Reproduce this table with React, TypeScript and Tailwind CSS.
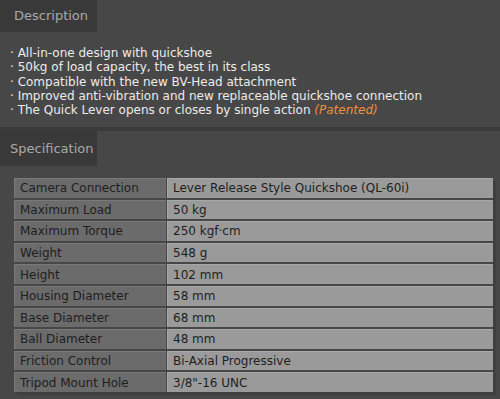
import React from "react";

const features = [
  "All-in-one design with quickshoe",
  "50kg of load capacity, the best in its class",
  "Compatible with the new BV-Head attachment",
  "Improved anti-vibration and new replaceable quickshoe connection",
];

const specs: [string, string][] = [
  ["Camera Connection", "Lever Release Style Quickshoe (QL-60i)"],
  ["Maximum Load", "50 kg"],
  ["Maximum Torque", "250 kgf·cm"],
  ["Weight", "548 g"],
  ["Height", "102 mm"],
  ["Housing Diameter", "58 mm"],
  ["Base Diameter", "68 mm"],
  ["Ball Diameter", "48 mm"],
  ["Friction Control", "Bi-Axial Progressive"],
  ["Tripod Mount Hole", "3/8\"-16 UNC"],
];

export default function App() {
  return (
    <div
      className="h-[399px] w-[500px] overflow-hidden bg-[#474747]"
      style={{ fontFamily: '"DejaVu Sans", sans-serif' }}
    >
      {/* Description header tab */}
      <div className="h-[32px]">
        <div className="flex h-full w-[97px] items-center bg-[#393939] pl-[14px] text-[13px] text-[#a9a9a9]">
          Description
        </div>
      </div>
      <ul className="pl-[10px] pt-[14px] text-[12px] leading-[14.3px] text-[#ececec]">
        {features.map((f) => (
          <li key={f}>· {f}</li>
        ))}
        <li>
          · The Quick Lever opens or closes by single action{" "}
          <span className="italic text-[#f0903a]">(Patented)</span>
        </li>
      </ul>
      <div className="mt-[9.5px] h-[4px] bg-[#3c3c3c]" />
      {/* Specification header tab */}
      <div className="h-[35px]">
        <div className="flex h-full w-[97px] items-center bg-[#393939] pl-[10px] text-[13px] text-[#a9a9a9]">
          Specification
        </div>
      </div>
      <div className="pl-[14px] pt-[12px]">
        <div className="flex w-[479px] flex-col gap-[2px] shadow-[3px_3px_0_#3f3f3f]">
          {specs.map(([k, v]) => (
            <div key={k} className="flex h-[19.6px] gap-[1px] text-[12px] text-[#1e1e1e]">
              <div className="flex w-[152px] items-center border-t border-l border-[#7a7a7a] bg-[#6b6b6b] pl-[5px]">
                {k}
              </div>
              <div className="flex flex-1 items-center border-t border-l border-[#a8a8a8] bg-[#9a9a9a] pl-[5px]">
                {v}
              </div>
            </div>
          ))}
        </div>
      </div>
    </div>
  );
}
